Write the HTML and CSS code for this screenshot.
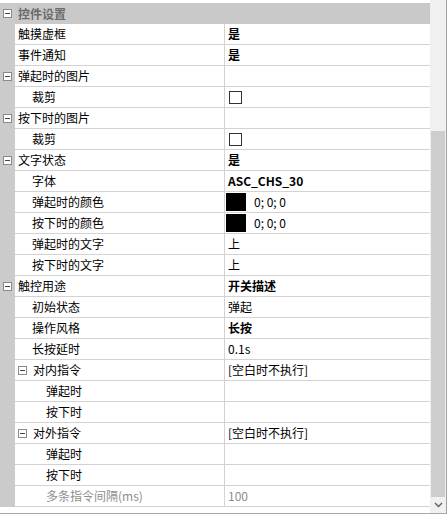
FILE: index.html
```html
<!DOCTYPE html>
<html lang="zh-CN">
<head>
    <meta charset="UTF-8">
    <title>控件设置</title>
    <link rel="stylesheet" href="styles.css">
</head>
<body>
    <div class="panel">
        <div class="grid">
            <div class="row header">
                <div class="gutter"><span class="toggle"></span></div>
                <div class="name">控件设置</div>
                <div class="value"></div>
            </div>

            <div class="row">
                <div class="gutter"></div>
                <div class="name">触摸虚框</div>
                <div class="value bold">是</div>
            </div>
            <div class="row">
                <div class="gutter"></div>
                <div class="name">事件通知</div>
                <div class="value bold">是</div>
            </div>

            <div class="row">
                <div class="gutter"><span class="toggle"></span></div>
                <div class="name">弹起时的图片</div>
                <div class="value"></div>
            </div>
            <div class="row">
                <div class="gutter"></div>
                <div class="name lv1">裁剪</div>
                <div class="value"><span class="check"></span></div>
            </div>

            <div class="row">
                <div class="gutter"><span class="toggle"></span></div>
                <div class="name">按下时的图片</div>
                <div class="value"></div>
            </div>
            <div class="row">
                <div class="gutter"></div>
                <div class="name lv1">裁剪</div>
                <div class="value"><span class="check"></span></div>
            </div>

            <div class="row">
                <div class="gutter"><span class="toggle"></span></div>
                <div class="name">文字状态</div>
                <div class="value bold">是</div>
            </div>
            <div class="row">
                <div class="gutter"></div>
                <div class="name lv1">字体</div>
                <div class="value bold">ASC_CHS_30</div>
            </div>
            <div class="row">
                <div class="gutter"></div>
                <div class="name lv1">弹起时的颜色</div>
                <div class="value"><span class="swatch"></span>0; 0; 0</div>
            </div>
            <div class="row">
                <div class="gutter"></div>
                <div class="name lv1">按下时的颜色</div>
                <div class="value"><span class="swatch"></span>0; 0; 0</div>
            </div>
            <div class="row">
                <div class="gutter"></div>
                <div class="name lv1">弹起时的文字</div>
                <div class="value">上</div>
            </div>
            <div class="row">
                <div class="gutter"></div>
                <div class="name lv1">按下时的文字</div>
                <div class="value">上</div>
            </div>

            <div class="row">
                <div class="gutter"><span class="toggle"></span></div>
                <div class="name">触控用途</div>
                <div class="value bold">开关描述</div>
            </div>
            <div class="row">
                <div class="gutter"></div>
                <div class="name lv1">初始状态</div>
                <div class="value">弹起</div>
            </div>
            <div class="row">
                <div class="gutter"></div>
                <div class="name lv1">操作风格</div>
                <div class="value bold">长按</div>
            </div>
            <div class="row">
                <div class="gutter"></div>
                <div class="name lv1">长按延时</div>
                <div class="value">0.1s</div>
            </div>

            <div class="row">
                <div class="gutter"></div>
                <div class="name sub"><span class="toggle"></span>对内指令</div>
                <div class="value">[空白时不执行]</div>
            </div>
            <div class="row">
                <div class="gutter"></div>
                <div class="name lv2">弹起时</div>
                <div class="value"></div>
            </div>
            <div class="row">
                <div class="gutter"></div>
                <div class="name lv2">按下时</div>
                <div class="value"></div>
            </div>

            <div class="row">
                <div class="gutter"></div>
                <div class="name sub"><span class="toggle"></span>对外指令</div>
                <div class="value">[空白时不执行]</div>
            </div>
            <div class="row">
                <div class="gutter"></div>
                <div class="name lv2">弹起时</div>
                <div class="value"></div>
            </div>
            <div class="row">
                <div class="gutter"></div>
                <div class="name lv2">按下时</div>
                <div class="value"></div>
            </div>
            <div class="row disabled">
                <div class="gutter"></div>
                <div class="name lv2">多条指令间隔(ms)</div>
                <div class="value">100</div>
            </div>
        </div>

        <div class="scrollbar">
            <div class="track">
                <div class="thumb"></div>
            </div>
            <div class="arrow">
                <svg width="9" height="6" viewBox="0 0 9 6">
                    <path d="M1 1 L4.5 4.5 L8 1" fill="none" stroke="#606060" stroke-width="1.4"/>
                </svg>
            </div>
        </div>
    </div>
</body>
</html>
```

FILE: styles.css
```css
body {
    margin: 0;
    background-color: #fff;
    font-family: "Noto Sans CJK SC", "Microsoft YaHei", sans-serif;
    font-size: 12px;
    color: #000;
}
.panel {
    display: flex;
    width: 447px;
    height: 514px;
    box-sizing: border-box;
    border-bottom: 1px solid #a8a8a8;
    border-right: 1px solid #a0a0a0;
    background-color: #fff;
}
.grid {
    width: 430px;
    padding-top: 3px;
}
.row {
    display: flex;
    height: 21px;
}
.gutter {
    width: 15px;
    flex: none;
    background-color: #cbcbcb;
    display: flex;
    align-items: center;
    justify-content: center;
}
.name,
.value {
    box-sizing: border-box;
    border-bottom: 1px solid #d3d3d3;
    display: flex;
    align-items: center;
    white-space: nowrap;
    line-height: 20px;
}
.name {
    width: 210px;
    padding-left: 3px;
    border-right: 1px solid #d3d3d3;
}
.value {
    flex: 1;
    padding-left: 3px;
}
.lv1 {
    padding-left: 17px;
}
.lv2 {
    padding-left: 31px;
}
.sub {
    padding-left: 3px;
}
.sub .toggle {
    margin-right: 6px;
}
.header {
    background-color: #c9c9c9;
    font-weight: bold;
    color: #6b6b6b;
}
.header .name,
.header .value {
    border: none;
}
.bold {
    font-weight: bold;
}
.disabled {
    color: #8e8e8e;
}
.toggle {
    position: relative;
    display: inline-block;
    width: 7px;
    height: 7px;
    border: 1px solid #8a8a8a;
    background-color: #fff;
    flex: none;
}
.toggle::after {
    content: "";
    position: absolute;
    left: 1px;
    top: 3px;
    width: 5px;
    height: 1px;
    background-color: #444;
}
.check {
    display: inline-block;
    width: 11px;
    height: 11px;
    border: 1px solid #333;
    margin-left: 1px;
}
.swatch {
    display: inline-block;
    width: 20px;
    height: 18px;
    background-color: #000;
    margin-left: -2px;
    margin-right: 8px;
}
.scrollbar {
    flex: 1;
    display: flex;
    flex-direction: column;
    background-color: #f0f0f0;
}
.track {
    flex: 1;
    padding: 131px 1px 0 1px;
}
.thumb {
    height: 366px;
    background-color: #cdcdcd;
}
.arrow {
    height: 16px;
    display: flex;
    align-items: center;
    justify-content: center;
}
```
